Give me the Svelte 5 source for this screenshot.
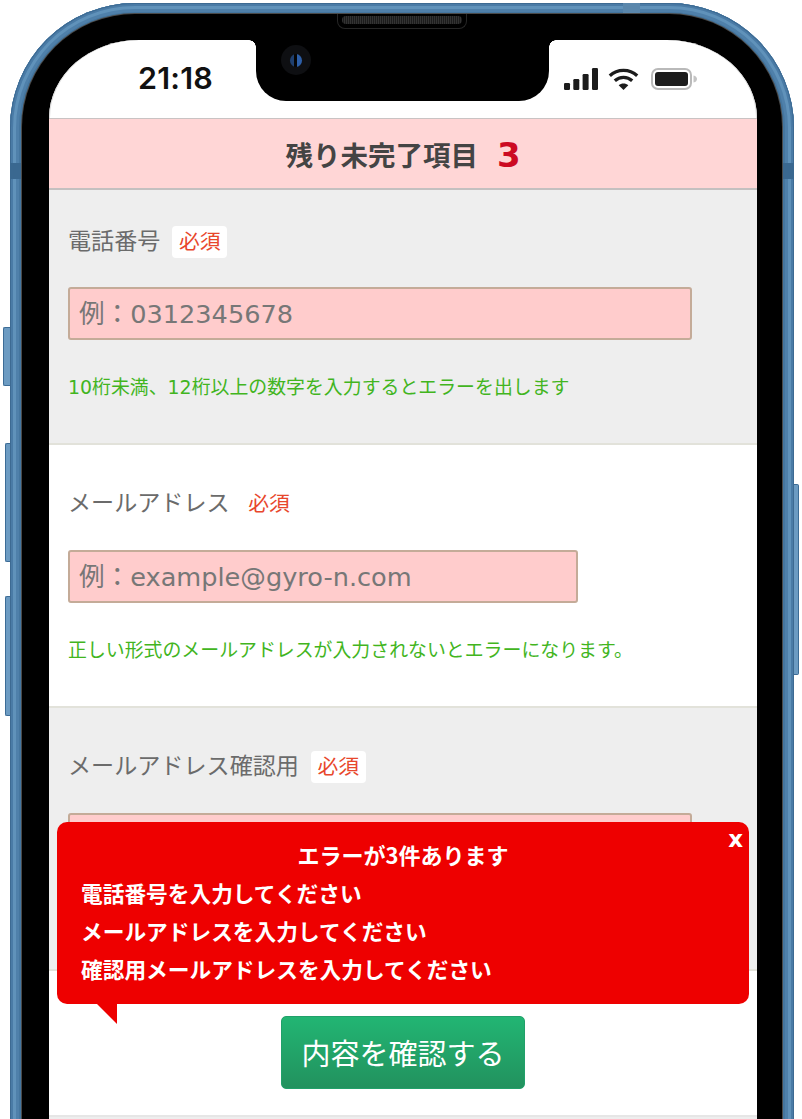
<script>
  const sections = [
    { label: 'メールアドレス', placeholder: '例：example@gyro-n.com', help: '正しい形式のメールアドレスが入力されないとエラーになります。', width: 'mid', tone: 'plain' },
    { label: 'メールアドレス確認用', placeholder: '', help: '', width: 'wide', tone: 'grey' }
  ];
  const errors = ['電話番号を入力してください', 'メールアドレスを入力してください', '確認用メールアドレスを入力してください'];
</script>

<div class="stage">
  <div class="device">
    <i class="key k1"></i><i class="key k2"></i><i class="key k3"></i><i class="key k4"></i>
    <i class="band b1"></i><i class="band b2"></i><i class="band b3"></i>
    <div class="bezel">
      <div class="speaker"></div>
      <div class="screen">
        <div class="notch"><span class="flare fl"></span><span class="flare fr"></span><span class="camera"><span class="lens"></span></span></div>
        <header class="status">
          <span class="time">21:18</span>
          <span class="icons">
            <svg width="34" height="22" viewBox="0 0 34 22" fill="#1c1c1c">
              <rect x="0" y="15" width="6" height="7" rx="1.2"/>
              <rect x="9.300" y="11" width="6" height="11" rx="1.2"/>
              <rect x="18.600" y="6" width="6" height="16" rx="1.2"/>
              <rect x="28" y="0" width="6" height="22" rx="1.2"/>
            </svg>
            <svg width="31" height="22" viewBox="0 0 31 22" fill="none" stroke="#1c1c1c" stroke-width="3.300">
              <path d="M1.800 7.800C9.500 .6 21.500 .6 29.200 7.800"/>
              <path d="M6.800 12.800C11.800 8.200 19.200 8.200 24.200 12.800"/>
              <path d="M15.500 22L10.700 17.300C13.400 14.900 17.600 14.900 20.300 17.300Z" fill="#1c1c1c" stroke="none"/>
            </svg>
            <svg width="46" height="22" viewBox="0 0 46 22">
              <rect x="1" y="1" width="39" height="20" rx="6" fill="none" stroke="#b9b9b9" stroke-width="2"/>
              <rect x="4" y="4" width="33" height="14" rx="3" fill="#1c1c1c"/>
              <path d="M42.500 7.500C45 8 46 9.500 46 11S45 14 42.500 14.500Z" fill="#c4c4c4"/>
            </svg>
          </span>
        </header>

        <div class="banner"><span>残り未完了項目</span><b>3</b></div>

        <section class="field grey first">
          <div class="label">電話番号<span class="req">必須</span></div>
          <input class="wide" placeholder="例：0312345678" />
          <p class="help">10桁未満、12桁以上の数字を入力するとエラーを出します</p>
        </section>

        {#each sections as s}
          <section class="field {s.tone}">
            <div class="label">{s.label}<span class="req">必須</span></div>
            <input class={s.width} placeholder={s.placeholder} />
            <p class="help">{s.help}</p>
          </section>
        {/each}

        <div class="actions"><button>内容を確認する</button></div>
        <div class="rest"></div>

        <aside class="alert">
          <span class="close">x</span>
          <h2>エラーが3件あります</h2>
          {#each errors as e}<p>{e}</p>{/each}
        </aside>
      </div>
    </div>
  </div>
</div>

<style>
  :global(body) { margin: 0; background: #fff; }
  .stage {
    width: 802px; height: 1119px; overflow: hidden; background: #fff;
    padding: 3px 8px 0 10px; box-sizing: border-box;
    font-family: "Noto Sans CJK JP", "Noto Sans", sans-serif;
  }
  .device {
    position: relative; height: 1300px; box-sizing: border-box; padding: 11px 12px 0;
    border-radius: 125px;
    background: #45769f;
    box-shadow: inset 0 0 0 1px #3d6a92, inset 0 0 0 3px #4a7ba6, inset 0 0 0 6px #6092ba, inset 0 0 0 9px #4f80aa;
  }
  .key { position: absolute; display: block; background: #6c9bc2; border: 1px solid #3c6c96; border-right: 0; border-radius: 2px 0 0 2px; box-sizing: border-box; }
  .k1 { left: -7px; width: 7px; top: 324px; height: 59px; }
  .k2 { left: -5px; width: 5px; top: 440px; height: 119px; }
  .k3 { left: -5px; width: 5px; top: 593px; height: 120px; }
  .k4 { right: -5px; width: 5px; top: 481px; height: 191px; border: 1px solid #3c6c96; border-left: 0; border-radius: 0 2px 2px 0; }
  .band { position: absolute; display: block; background: #3a6890; }
  .b1 { left: 0; width: 12px; top: 160px; height: 16px; }
  .b2 { right: 0; width: 12px; top: 160px; height: 16px; }
  .b3 { left: 613px; width: 17px; top: 0; height: 11px; background: #5a87ac; }

  .bezel {
    position: relative; height: 100%; box-sizing: border-box; padding: 26px 25px 0 27px;
    background: #000; border-radius: 113px; box-shadow: 0 0 0 1px #4a4a4a;
  }
  .speaker {
    position: absolute; left: 315px; top: 0; width: 130px; height: 15px; box-sizing: border-box;
    border: 1px solid #262626; border-top: 0; border-radius: 0 0 8px 8px;
    background: #000; padding: 0;
  }
  .speaker::after {
    content: ""; position: absolute; left: 4px; right: 4px; top: 2px; height: 8px; border-radius: 4px;
    background: repeating-linear-gradient(90deg, #333 0 1px, #1c1c1c 1px 2px);
  }
  .screen {
    position: relative; height: 1240px; overflow: hidden; background: #fff;
    border-radius: 90px 90px 90px 90px / 78px 78px 86px 86px;
    box-shadow: inset 1px 0 0 #ddd, inset -1px 0 0 #ddd;
  }
  .notch {
    position: absolute; left: 207px; top: 0; width: 293px; height: 61px;
    background: #000; border-radius: 0 0 30px 30px;
  }
  .flare { position: absolute; top: 0; width: 7px; height: 7px; }
  .fl { left: -7px; background: radial-gradient(circle at 0 100%, #fff 0 6.500px, #000 7px); }
  .fr { right: -7px; background: radial-gradient(circle at 100% 100%, #fff 0 6.500px, #000 7px); }
  .camera { position: absolute; left: 25px; top: 5px; width: 30px; height: 30px; border-radius: 50%; background: #0e0f12; display: flex; align-items: center; justify-content: center; }
  .lens { width: 12px; height: 13px; border-radius: 50%; background: linear-gradient(90deg, #1f3f6e 0 35%, #050505 35% 60%, #2d5fa8 60%); }

  .status {
    height: 78px; box-sizing: border-box; display: flex; align-items: center; justify-content: space-between;
    padding: 0 60px 0 89px;
  }
  .time { font-family: Inter, "Liberation Sans", sans-serif; font-weight: 600; font-size: 30.500px; line-height: 1; color: #111; margin-top: -2px; letter-spacing: .2px; }
  .icons { display: flex; align-items: center; gap: 10px; }
  .icons svg { display: block; }
  .icons svg:last-child { margin-left: 2px; }

  .banner {
    height: 72px; box-sizing: border-box; background: #ffd6d6;
    border-top: 1.500px solid #c9c3c3; border-bottom: 2px solid #c4c0c0;
    display: flex; align-items: center; justify-content: center; gap: 19px;
    font-size: 27.500px; font-weight: 700; color: #444;
  }
  .banner b { font-family: "DejaVu Sans", sans-serif; font-size: 34px; color: #cc0a22; font-weight: 700; line-height: 1; margin-top: 3px; }

  .field { height: 263px; box-sizing: border-box; padding: 43px 19px 0 19px; border-bottom: 2px solid #e2e2da; }
  .field.first { height: 255px; padding-top: 36px; }
  .field:not(.first) .label { margin-bottom: 30px; }
  .grey { background: #eee; }
  .plain { background: #fff; }
  .label { display: flex; align-items: flex-start; height: 32px; margin-bottom: 29px; font-size: 23.100px; line-height: 26px; color: #6b6b6b; }
  .req {
    margin-left: 12px; padding: 0 6.500px; height: 32px; line-height: 28px; box-sizing: border-box;
    background: #fff; border-radius: 4px; color: #e8472c; font-size: 20.800px;
  }
  input {
    display: block; box-sizing: border-box; height: 53px; margin: 0; padding: 1px 9px 0;
    background: #ffcccc; border: 2px solid #c4ab98; border-radius: 3px;
    font-family: "DejaVu Sans", "Noto Sans CJK JP", sans-serif; font-size: 25.600px; outline: none;
  }
  input::placeholder { color: #777; opacity: 1; }
  .wide { width: 624px; }
  .mid { width: 510px; }
  .help { margin: 33px 0 0; font-family: "DejaVu Sans", "Noto Sans CJK JP", sans-serif; font-size: 18.900px; line-height: 28px; color: #42b51e; }

  .actions { height: 146px; box-sizing: border-box; padding-top: 45px; display: flex; justify-content: center; border-bottom: 2px solid #e6e6e6; background: #fff; }
  button {
    width: 244px; height: 73px; border: 1px solid #21a06a; border-radius: 5px; padding: 0;
    background: linear-gradient(#22b573, #22925e); color: #fff;
    font-family: inherit; font-size: 29px; line-height: 1;
  }
  .rest { height: 200px; background: #eee; }

  .alert {
    position: absolute; left: 8px; top: 782px; width: 692px; height: 182px; box-sizing: border-box;
    padding: 14px 24px 0; background: #ee0000; border-radius: 10px; color: #fff; font-weight: 700;
  }
  .alert::after {
    content: ""; position: absolute; left: 40px; top: 100%; width: 0; height: 0;
    border-style: solid; border-width: 0 20px 20px 0;
    border-color: transparent #ee0000 transparent transparent;
  }
  .alert h2 { margin: 0 0 2px; font-size: 22px; line-height: 36px; text-align: center; font-weight: 700; }
  .alert p { margin: 0; font-size: 21.700px; line-height: 38px; }
  .close { position: absolute; right: 6px; top: 4px; font-family: "DejaVu Sans", sans-serif; font-weight: 700; font-size: 23px; line-height: 26px; }
</style>
